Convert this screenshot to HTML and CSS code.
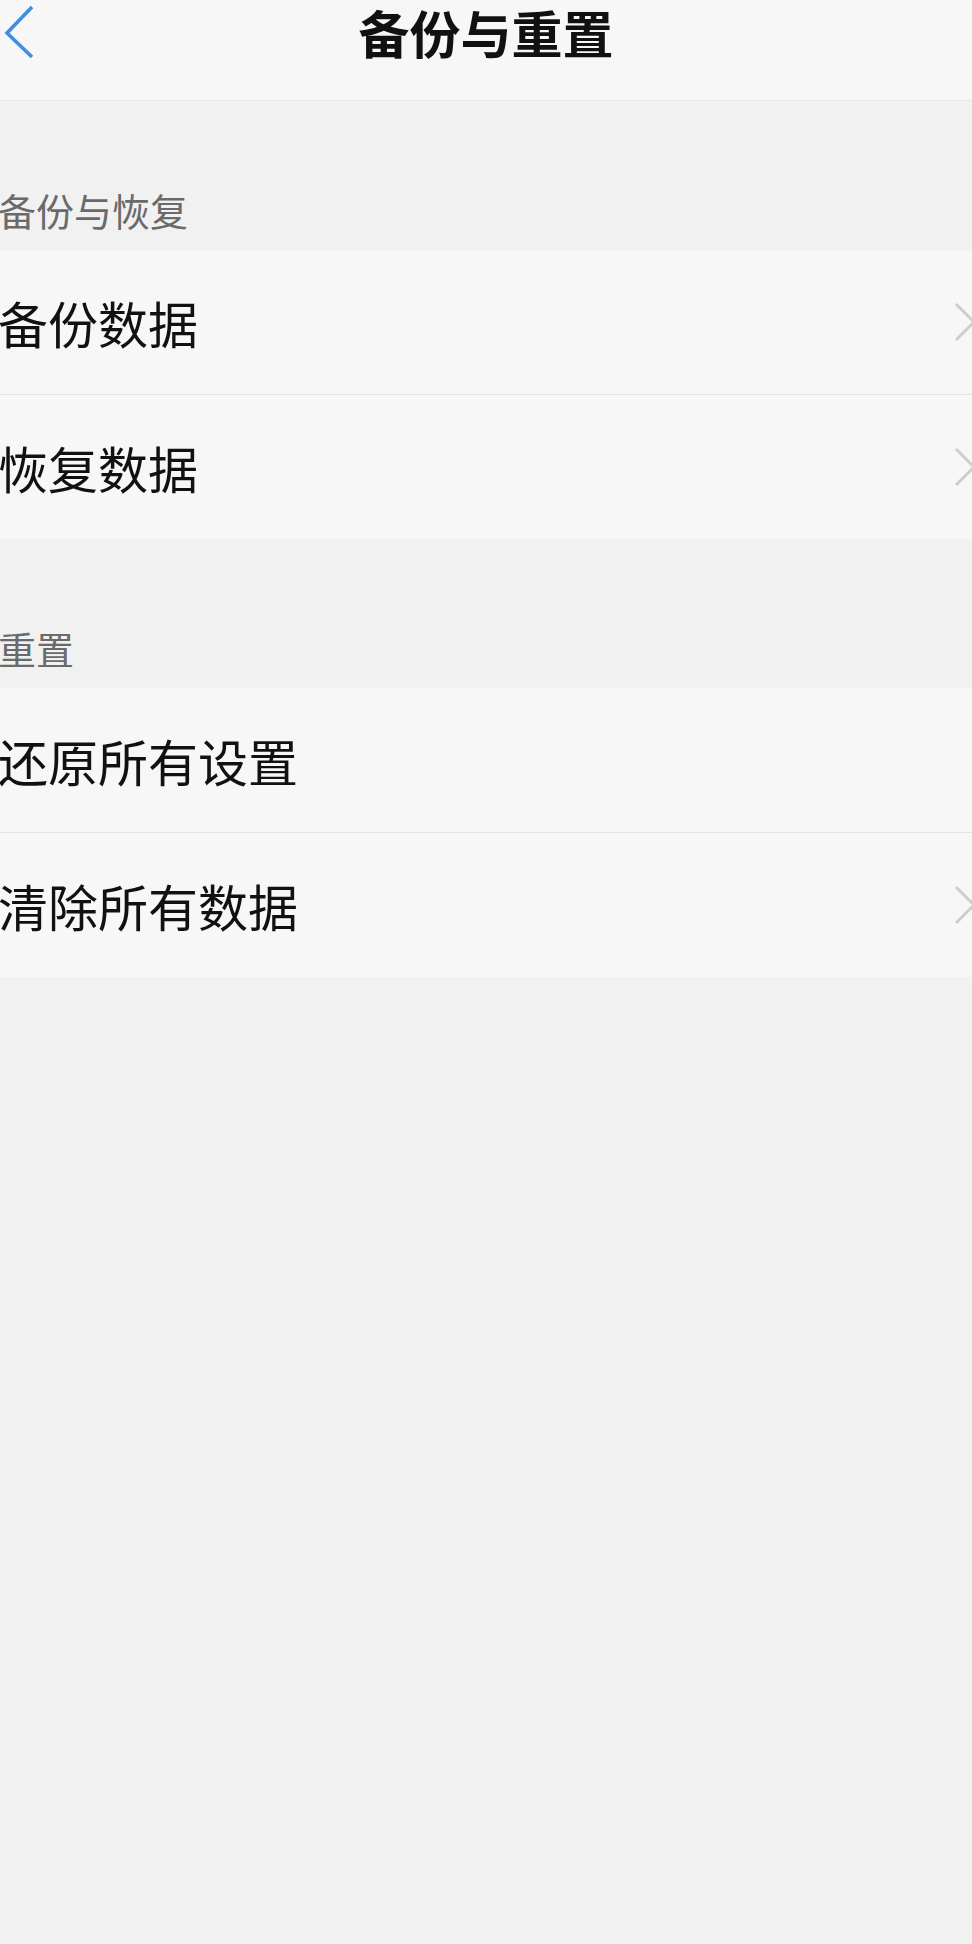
FILE: index.html
```html
<!DOCTYPE html>
<html lang="zh-CN">
<head>
    <meta charset="UTF-8">
    <meta name="viewport" content="width=device-width, initial-scale=1.0">
    <title>备份与重置</title>
    <link rel="stylesheet" href="styles.css">
</head>
<body>
    <div class="nav-bar">
        <div class="nav-back">
            <svg width="32" height="56" viewBox="0 0 32 56">
                <polyline points="29,3 4,29 29,53" fill="none" stroke="#3d8fdf" stroke-width="3.6"/>
            </svg>
        </div>
        <h1 class="nav-title">备份与重置</h1>
        <div></div>
    </div>

    <div class="section-label">备份与恢复</div>
    <div class="group">
        <div class="row">
            <span class="row-text">备份数据</span>
            <svg class="chevron" width="24" height="40" viewBox="0 0 24 40">
                <polyline points="2,2 20,20 2,38" fill="none" stroke="#cdcdcd" stroke-width="3"/>
            </svg>
        </div>
        <div class="row">
            <span class="row-text">恢复数据</span>
            <svg class="chevron" width="24" height="40" viewBox="0 0 24 40">
                <polyline points="2,2 20,20 2,38" fill="none" stroke="#cdcdcd" stroke-width="3"/>
            </svg>
        </div>
    </div>

    <div class="section-label">重置</div>
    <div class="group">
        <div class="row">
            <span class="row-text">还原所有设置</span>
        </div>
        <div class="row">
            <span class="row-text">清除所有数据</span>
            <svg class="chevron" width="24" height="40" viewBox="0 0 24 40">
                <polyline points="2,2 20,20 2,38" fill="none" stroke="#cdcdcd" stroke-width="3"/>
            </svg>
        </div>
    </div>
</body>
</html>
```
FILE: styles.css
```css
body {
    margin: 0;
    font-family: "Noto Sans CJK SC", "Noto Sans", sans-serif;
    background-color: #f1f1f1;
    overflow-x: hidden;
}
.nav-bar {
    display: grid;
    grid-template-columns: 1fr auto 1fr;
    align-items: start;
    height: 101px;
    background-color: #f7f7f7;
    border-bottom: 1px solid #e6e6e6;
    box-sizing: border-box;
}
.nav-back {
    padding: 4px 0 0 3px;
}
.nav-back svg {
    display: block;
}
.nav-title {
    margin: 0;
    padding-top: 0;
    font-size: 51px;
    line-height: 64px;
    font-weight: bold;
    color: #111;
}
.section-label {
    display: flex;
    align-items: flex-end;
    height: 149px;
    box-sizing: border-box;
    padding: 0 0 19px 0;
    margin-left: -2px;
    font-size: 38px;
    line-height: 42px;
    color: #6a6a6a;
}
.group {
    background-color: #f7f7f7;
}
.row {
    display: flex;
    align-items: center;
    justify-content: space-between;
    height: 144px;
}
.row + .row {
    border-top: 1px solid #e2e2e2;
}
.row-text {
    margin-left: -2px;
    font-size: 50px;
    color: #111;
}
.chevron {
    margin-right: -6px;
}
```
